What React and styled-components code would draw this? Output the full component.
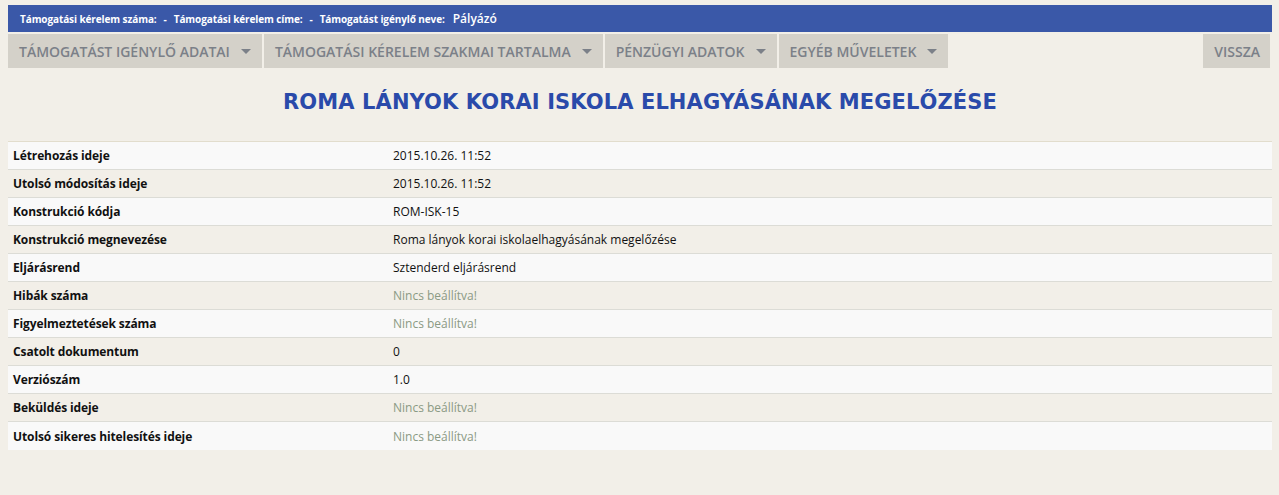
import React from 'react'
import styled, { createGlobalStyle } from 'styled-components'

const GlobalStyle = createGlobalStyle`
  html, body {
    margin: 0;
    padding: 0;
    background: #f2efe8;
  }
  body {
    padding: 5px 7px 0 8px;
    font-family: 'Open Sans', 'Liberation Sans', sans-serif;
  }
`

const InfoBar = styled.div`
  display: flex;
  align-items: center;
  height: 27px;
  padding: 0 12px;
  background: #3a58a8;
  color: #fff;
  font-size: 10px;
  font-weight: 700;
  letter-spacing: -0.1px;
`

const InfoSep = styled.span`
  margin: 0 7px;
`

const InfoValue = styled.span`
  margin-left: 8px;
  font-size: 12px;
  font-weight: 600;
  letter-spacing: 0;
`

const Nav = styled.div`
  display: flex;
  gap: 2px;
  margin-top: 2px;
  height: 34px;
`

const NavButton = styled.div`
  display: flex;
  align-items: center;
  gap: 11px;
  padding: 0 11px 0 11px;
  background: #d4d1c9;
  color: #7b8088;
  font-size: 14px;
  font-weight: 600;
  text-transform: uppercase;
  white-space: nowrap;
  margin-left: ${p => (p.$push ? 'auto' : '0')};
  margin-right: ${p => (p.$push ? '2px' : '0')};
  padding-right: ${p => (p.$push ? '10px' : '11px')};
`

const Caret = styled.span`
  width: 0;
  height: 0;
  border-left: 5px solid transparent;
  border-right: 5px solid transparent;
  border-top: 5px solid #7b8088;
  margin-top: 1px;
`

const Title = styled.h1`
  margin: 22px 0 0;
  height: 51px;
  text-align: center;
  color: #2a4aaa;
  font-family: 'DejaVu Sans', sans-serif;
  font-size: 21px;
  font-weight: 700;
  letter-spacing: 0.1px;
  text-transform: uppercase;
`

const Table = styled.div`
  border-top: 1px solid #e2ddcd;
`

const Row = styled.div`
  display: grid;
  grid-template-columns: 380px 1fr;
  align-items: center;
  height: 27px;
  padding-left: 5px;
  border-bottom: 1px solid #dcdcd6;
  background: ${p => (p.$odd ? '#f9f9f9' : '#f2efe8')};
  font-size: 12px;
  color: #111;

  &:last-child {
    border-bottom: none;
    height: 28px;
  }
`

const Label = styled.span`
  font-weight: 700;
  letter-spacing: -0.1px;
`

const Value = styled.span`
  color: ${p => (p.$empty ? '#8b9a84' : '#111')};
`

const rows = [
  ['Létrehozás ideje', '2015.10.26. 11:52'],
  ['Utolsó módosítás ideje', '2015.10.26. 11:52'],
  ['Konstrukció kódja', 'ROM-ISK-15'],
  ['Konstrukció megnevezése', 'Roma lányok korai iskolaelhagyásának megelőzése'],
  ['Eljárásrend', 'Sztenderd eljárásrend'],
  ['Hibák száma', null],
  ['Figyelmeztetések száma', null],
  ['Csatolt dokumentum', '0'],
  ['Verziószám', '1.0'],
  ['Beküldés ideje', null],
  ['Utolsó sikeres hitelesítés ideje', null],
]

const menus = [
  'Támogatást igénylő adatai',
  'Támogatási kérelem szakmai tartalma',
  'Pénzügyi adatok',
  'Egyéb műveletek',
]

export default function App() {
  return (
    <>
      <GlobalStyle />
      <InfoBar>
        Támogatási kérelem száma:
        <InfoSep>-</InfoSep>
        Támogatási kérelem címe:
        <InfoSep>-</InfoSep>
        Támogatást igénylő neve:
        <InfoValue>Pályázó</InfoValue>
      </InfoBar>
      <Nav>
        {menus.map(m => (
          <NavButton key={m}>
            {m}
            <Caret />
          </NavButton>
        ))}
        <NavButton $push>Vissza</NavButton>
      </Nav>
      <Title>Roma lányok korai iskola elhagyásának megelőzése</Title>
      <Table>
        {rows.map(([label, value], i) => (
          <Row key={label} $odd={i % 2 === 0}>
            <Label>{label}</Label>
            <Value $empty={value === null}>{value === null ? 'Nincs beállítva!' : value}</Value>
          </Row>
        ))}
      </Table>
    </>
  )
}
